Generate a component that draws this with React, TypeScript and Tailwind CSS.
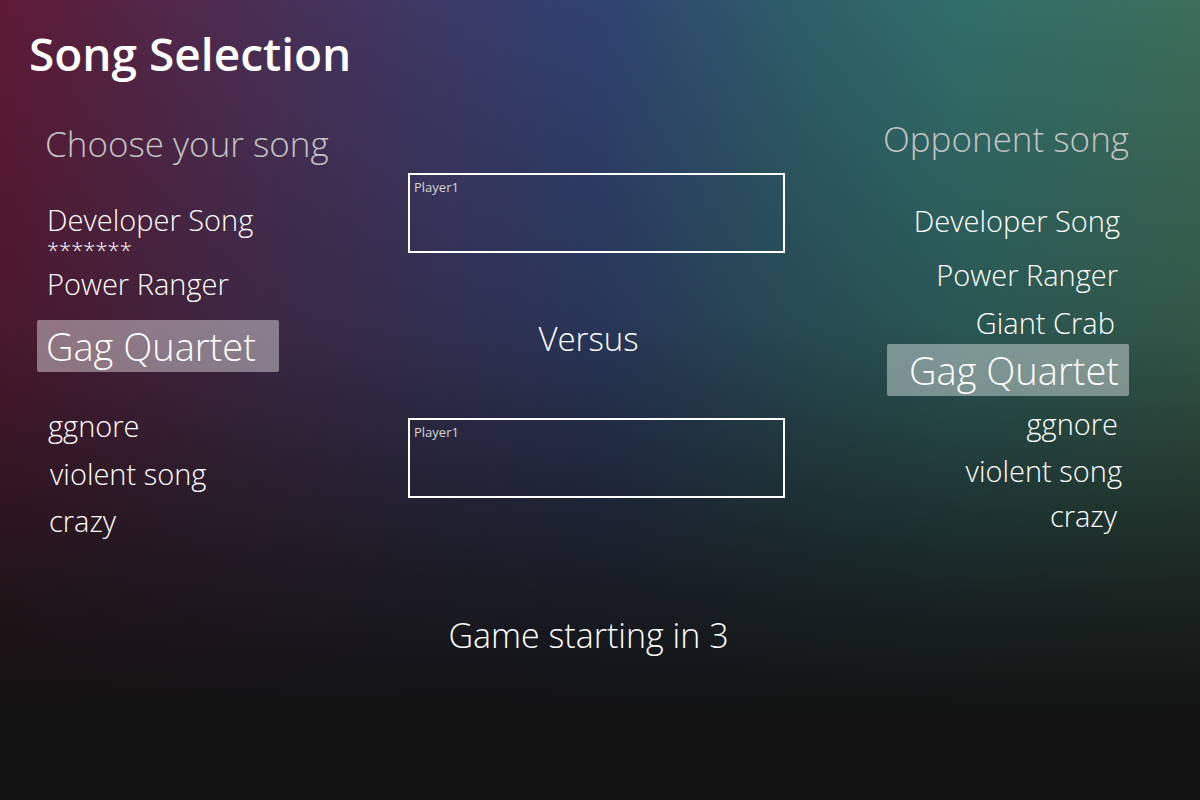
const mine = [
  { name: "Developer Song", sub: "*******" },
  { name: "Power Ranger" },
];

const PlayerBox = () => (
  <div className="h-[80px] border-2 border-white pl-[4px] pt-[4px]">
    <span className="block text-[13px] leading-[16px] text-[#d6d6d6]">Player1</span>
  </div>
);

const App = () => {
  return (
    <div
      className="relative h-[800px] w-full overflow-hidden text-white bg-[linear-gradient(180deg,rgba(18,18,18,0)_0%,rgba(18,18,18,0.25)_40%,rgba(18,18,18,0.8)_74%,#121212_90%),linear-gradient(90deg,#5e1a36_0%,#4a2f55_22%,#3b3a68_38%,#2f4270_50%,#2e6068_68%,#316e6a_80%,#3d6e5a_100%)]"
      style={{ fontFamily: '"Open Sans", "Noto Sans", sans-serif' }}
    >
      {/* Page title */}
      <h1 className="pl-[29px] pt-[25px] text-[46px] font-semibold leading-[56px]">Song Selection</h1>

      <div className="mt-[36px] grid grid-cols-[371px_377px_1fr] pl-[37px] pr-[71px]">
        {/* Player list */}
        <div className="flex flex-col">
          <h2 className="mt-[5px] h-[44px] pl-[8px] text-[35px] font-light leading-[44px] text-[#c4c4c4]">
            Choose your song
          </h2>
          <div className="mt-[39px] flex h-[30px] items-center pl-[10px] text-[29px] font-light leading-[30px]">
            {mine[0].name}
          </div>
          <div className="h-[24px] pl-[10px] pt-[4px] text-[22px] font-light leading-[20px]">{mine[0].sub}</div>
          <div className="mt-[9px] flex h-[32px] items-center pl-[10px] text-[29px] font-light">{mine[1].name}</div>
          <div className="mt-[20px] flex h-[52px] w-[242px] items-center rounded-[2px] bg-white/40 pl-[9px] text-[38px] font-light">
            Gag Quartet
          </div>
          <div className="mt-[38px] flex h-[32px] items-center pl-[11px] text-[29px] font-light">ggnore</div>
          <div className="mt-[16px] flex h-[32px] items-center pl-[13px] text-[29px] font-light">violent song</div>
          <div className="mt-[15px] flex h-[32px] items-center pl-[12px] text-[29px] font-light">crazy</div>
        </div>

        {/* Match area */}
        <div className="flex flex-col">
          <div className="mt-[56px]">
            <PlayerBox />
          </div>
          <div className="flex h-[165px] items-center justify-center pr-[16px] pt-[7px] text-[33px] font-light">Versus</div>
          <PlayerBox />
          <div className="mt-[117px] flex h-[40px] items-center justify-center pr-[16px] text-[34px] font-light">
            Game starting in 3
          </div>
        </div>

        {/* Opponent list */}
        <div className="flex flex-col items-end">
          <h2 className="h-[44px] text-[35px] font-light leading-[44px] text-[#c4c4c4]">Opponent song</h2>
          <div className="mt-[44px] flex h-[32px] items-center pr-[9px] text-[29px] font-light">Developer Song</div>
          <div className="mt-[22px] flex h-[32px] items-center pr-[11px] text-[29px] font-light">Power Ranger</div>
          <div className="mt-[16px] flex h-[32px] items-center pr-[14px] text-[29px] font-light">Giant Crab</div>
          <div className="mt-[5px] flex h-[52px] w-[242px] items-center justify-end rounded-[2px] bg-white/40 pr-[10px] text-[38px] font-light">
            Gag Quartet
          </div>
          <div className="mt-[12px] flex h-[32px] items-center pr-[11px] text-[29px] font-light">ggnore</div>
          <div className="mt-[15px] flex h-[32px] items-center pr-[7px] text-[29px] font-light">violent song</div>
          <div className="mt-[13px] flex h-[32px] items-center pr-[12px] text-[29px] font-light">crazy</div>
        </div>
      </div>
    </div>
  );
};

export default App;
